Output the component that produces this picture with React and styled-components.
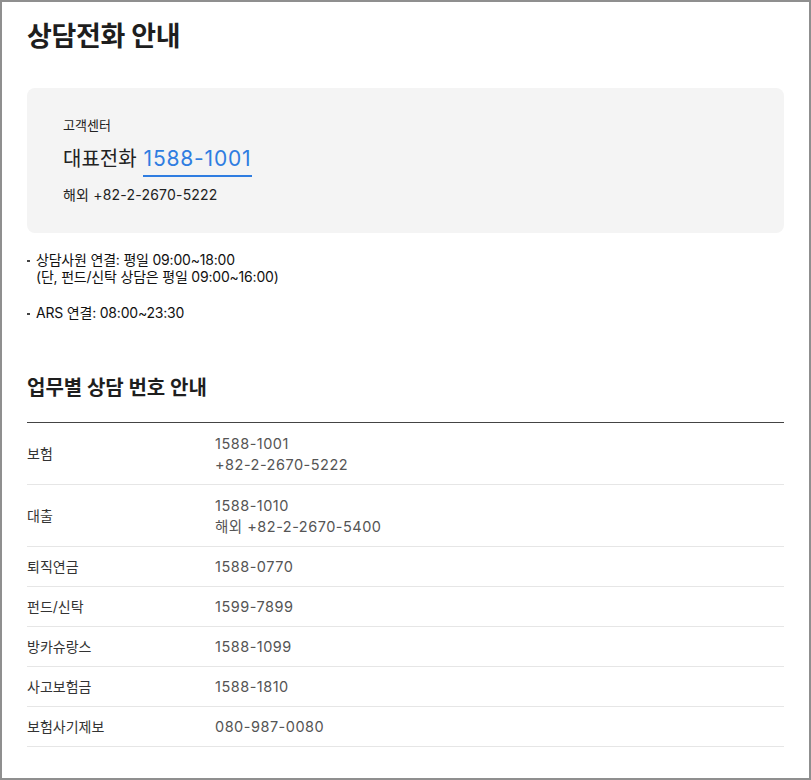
import React from "react";
import styled, { createGlobalStyle } from "styled-components";

const G = createGlobalStyle`
  html,body{margin:0;padding:0;background:#fff;}
  body{font-family:Inter,"Noto Sans CJK KR",sans-serif;color:#222;}
`;
const Frame = styled.div`
  box-sizing:border-box;width:811px;height:780px;border:2px solid #8f8f8f;
  padding:15px 25px 0 23px;overflow:hidden;
`;
const Title = styled.h1`margin:0;font-size:27px;font-weight:700;line-height:40px;color:#1e1e1e;letter-spacing:-0.3px;padding-left:2px;`;
const Card = styled.div`
  margin-top:31px;background:#f4f4f4;border-radius:8px;height:145px;box-sizing:border-box;
  padding:28px 36px 0;margin-left:2px;
`;
const Small = styled.div`font-size:13px;line-height:18px;color:#222;`;
const Main = styled.div`font-size:20px;line-height:30px;margin-top:10px;color:#222;display:flex;align-items:flex-start;gap:6px;`;
const Num = styled.span`color:#2f7de1;border-bottom:2px solid #2f7de1;padding:0 1px 1px;font-size:21px;letter-spacing:0.8px;`;
const Abroad = styled.div`font-size:14px;line-height:20px;margin-top:8px;letter-spacing:0.2px;`;
const List = styled.ul`list-style:none;margin:18px 0 0;padding:0 0 0 2px;`;
const Item = styled.li`
  position:relative;padding-left:9px;font-size:14px;line-height:17px;color:#111;letter-spacing:-0.2px;
  & + &{margin-top:19px;}
  &::before{content:"";position:absolute;left:0;top:9px;width:3px;height:2px;background:#444;}
`;
const H2 = styled.h2`margin:52px 0 0;font-size:20px;font-weight:700;line-height:30px;color:#1e1e1e;padding-left:2px;`;
const Table = styled.div`margin-top:19px;margin-left:2px;border-top:1px solid #444;`;
const Row = styled.div`
  display:grid;grid-template-columns:188px 1fr;align-items:center;border-bottom:1px solid #e6e6e6;
  min-height:${p => (p.$tall ? 62 : 40)}px;padding:${p => (p.$tall ? "9px 0" : "0")};box-sizing:border-box;
  font-size:14px;line-height:21px;
`;
const Label = styled.div`color:#333;`;
const Val = styled.div`color:#555;font-size:14.5px;letter-spacing:0.5px;`;

const rows = [
  ["보험", ["1588-1001", "+82-2-2670-5222"]],
  ["대출", ["1588-1010", "해외 +82-2-2670-5400"]],
  ["퇴직연금", ["1588-0770"]],
  ["펀드/신탁", ["1599-7899"]],
  ["방카슈랑스", ["1588-1099"]],
  ["사고보험금", ["1588-1810"]],
  ["보험사기제보", ["080-987-0080"]],
];

export default function App() {
  return (
    <Frame>
      <G />
      <Title>상담전화 안내</Title>
      <Card>
        <Small>고객센터</Small>
        <Main>대표전화 <Num>1588-1001</Num></Main>
        <Abroad>해외 +82-2-2670-5222</Abroad>
      </Card>
      <List>
        <Item>상담사원 연결: 평일 09:00~18:00<br />(단, 펀드/신탁 상담은 평일 09:00~16:00)</Item>
        <Item>ARS 연결: 08:00~23:30</Item>
      </List>
      <H2>업무별 상담 번호 안내</H2>
      <Table>
        {rows.map(([l, v]) => (
          <Row key={l} $tall={v.length > 1}>
            <Label>{l}</Label>
            <Val>{v.map(x => <div key={x}>{x}</div>)}</Val>
          </Row>
        ))}
      </Table>
    </Frame>
  );
}
